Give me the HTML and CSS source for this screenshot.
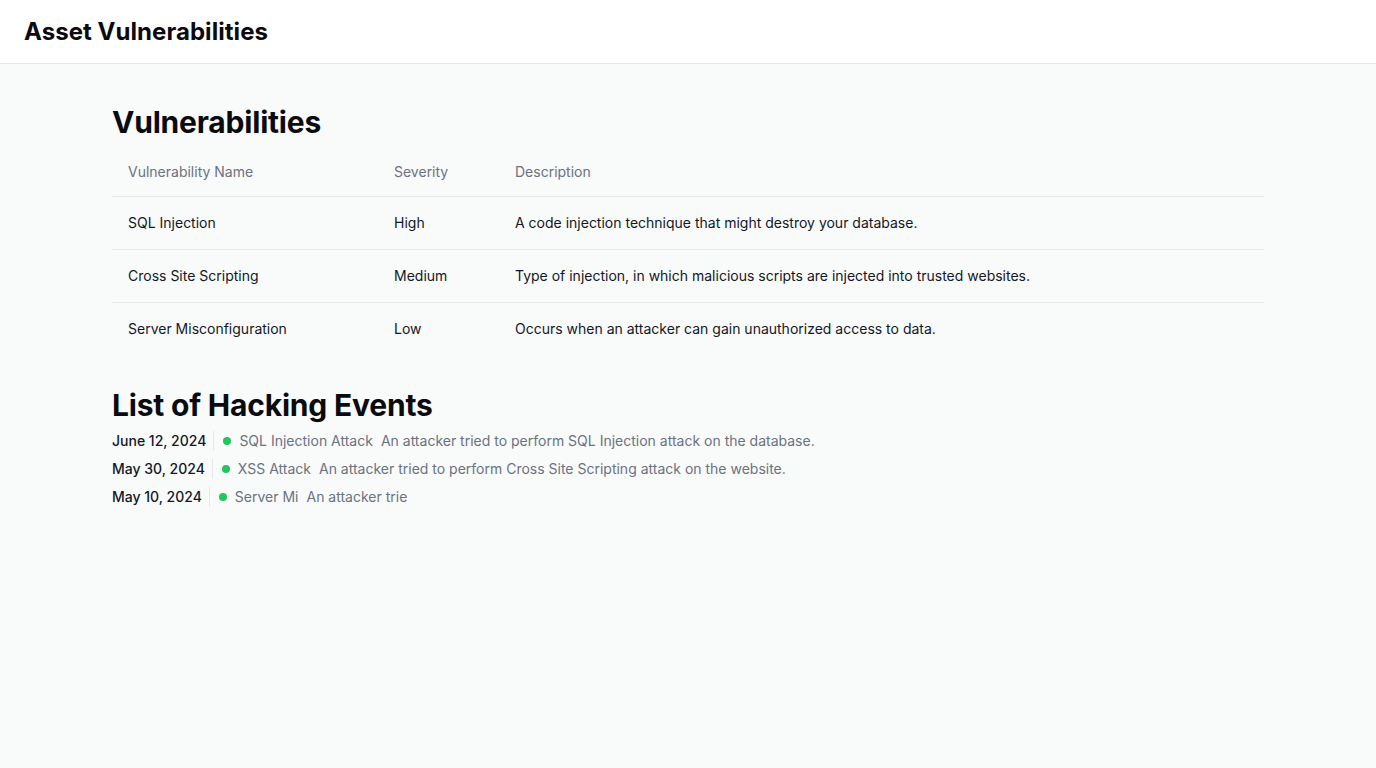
FILE: index.html
```html
<!DOCTYPE html>
<html lang="en">
<head>
<meta charset="utf-8">
<title>Asset Vulnerabilities</title>
<link rel="stylesheet" href="styles.css">
</head>
<body>
<header class="topbar">
  <h1 class="app-title">Asset Vulnerabilities</h1>
</header>
<main class="content">
  <section class="section">
    <h2 class="section-title">Vulnerabilities</h2>
    <table class="vuln-table">
      <thead>
        <tr>
          <th class="col-name">Vulnerability Name</th>
          <th class="col-sev">Severity</th>
          <th>Description</th>
        </tr>
      </thead>
      <tbody>
        <tr>
          <td>SQL Injection</td>
          <td>High</td>
          <td>A code injection technique that might destroy your database.</td>
        </tr>
        <tr>
          <td>Cross Site Scripting</td>
          <td>Medium</td>
          <td>Type of injection, in which malicious scripts are injected into trusted websites.</td>
        </tr>
        <tr>
          <td>Server Misconfiguration</td>
          <td>Low</td>
          <td>Occurs when an attacker can gain unauthorized access to data.</td>
        </tr>
      </tbody>
    </table>
  </section>
  <section class="section events">
    <h2 class="section-title">List of Hacking Events</h2>
    <ul class="event-list">
      <li class="event">
        <span class="event-date">June 12, 2024</span>
        <span class="event-body"><span class="dot"></span><span class="event-name">SQL Injection Attack</span><span class="event-desc">An attacker tried to perform SQL Injection attack on the database.</span></span>
      </li>
      <li class="event">
        <span class="event-date">May 30, 2024</span>
        <span class="event-body"><span class="dot"></span><span class="event-name">XSS Attack</span><span class="event-desc">An attacker tried to perform Cross Site Scripting attack on the website.</span></span>
      </li>
      <li class="event">
        <span class="event-date">May 10, 2024</span>
        <span class="event-body"><span class="dot"></span><span class="event-name">Server Mi</span><span class="event-desc">An attacker trie</span></span>
      </li>
    </ul>
  </section>
</main>
</body>
</html>
```
FILE: styles.css
```css
* { box-sizing: border-box; }
html, body { margin: 0; padding: 0; }
body {
  font-family: Inter, "Noto Sans", "Liberation Sans", sans-serif;
  background: #f9fafa;
  color: #111827;
  min-height: 768px;
}
.topbar {
  background: #ffffff;
  height: 64px;
  border-bottom: 1px solid #e5e7eb;
  display: flex;
  align-items: center;
  padding: 0 24px;
}
.app-title {
  margin: 0;
  font-size: 24px;
  line-height: 32px;
  font-weight: 700;
  color: #0b0b0f;
  letter-spacing: 0.05px;
}
.content {
  max-width: 1152px;
  margin: 0 auto;
  padding-top: 40px;
}
.section-title {
  margin: 0;
  font-size: 30px;
  line-height: 36px;
  font-weight: 700;
  color: #0b0b0f;
  letter-spacing: -0.2px;
}
.vuln-table {
  width: 100%;
  border-collapse: collapse;
  margin-top: 8px;
  font-size: 14px;
  line-height: 20px;
}
.vuln-table th {
  text-align: left;
  font-weight: 400;
  color: #6b7280;
  padding: 14px 16px;
  border-bottom: 1px solid #e5e7eb;
}
.vuln-table td {
  padding: 16px 16px;
  color: #111827;
  border-bottom: 1px solid #e5e7eb;
}
.vuln-table tbody tr:last-child td { border-bottom: none; }
.col-name { width: 266px; }
.col-sev { width: 121px; }
.events { margin-top: 32px; }
.event-list {
  list-style: none;
  margin: 4px 0 0;
  padding: 0;
  font-size: 14px;
  line-height: 20px;
}
.event {
  display: flex;
  align-items: center;
  height: 28px;
}
.event-date {
  font-weight: 500;
  color: #111827;
  padding-right: 7px;
  border-right: 1px solid #e5e7eb;
}
.event-body {
  display: flex;
  align-items: center;
  padding-left: 9px;
  color: #6b7280;
}
.dot {
  width: 8px;
  height: 8px;
  border-radius: 50%;
  background: #22c55e;
  margin-right: 8px;
}
.event-name { margin-right: 8px; }
```
